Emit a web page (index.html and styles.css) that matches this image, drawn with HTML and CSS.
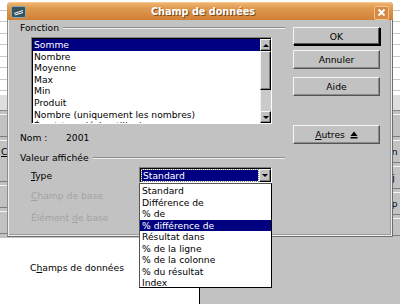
FILE: index.html
```html
<!DOCTYPE html>
<html lang="fr">

<head>
    <meta charset="UTF-8">
    <title>Champ de données</title>
    <link rel="stylesheet" href="styles.css">
</head>

<body>

    <div class="parent">
        <div class="sheet">
            <div class="strip left-strip"></div>
            <div class="strip right-strip"></div>
        </div>

        <div class="middle">
            <div class="side left-side">
                <div class="band"></div>
                <div class="pbox"></div>
                <div class="pbox tall"><u>C</u></div>
                <div class="pbox"></div>
                <div class="pbox"></div>
            </div>
            <div class="side right-side">
                <div class="band"></div>
                <div class="pbox">C</div>
                <div class="pbox">nn</div>
                <div class="pbox">Aj</div>
                <div class="pbox">pp</div>
                <div class="pbox short">ti</div>
            </div>
        </div>

        <div class="bottom">
            <div class="fields-pane">C<u>h</u>amps de données</div>
            <div class="grey-pane"></div>
        </div>
    </div>

    <div class="dialog">
        <div class="titlebar">
            <svg class="app-icon" width="15" height="12" viewBox="0 0 15 12">
                <rect x="0.5" y="0.5" width="14" height="11" rx="1.5" fill="#35525f" stroke="#8fa6b0" />
                <path d="M3 7.5 L12 4.5 M4 9 L12 6.5" stroke="#fff" stroke-width="1" />
            </svg>
            <span class="title">Champ de données</span>
            <span class="close">
                <svg width="9" height="9" viewBox="0 0 9 9">
                    <path d="M1.5 1.5 L7.5 7.5 M7.5 1.5 L1.5 7.5" stroke="#fff" stroke-width="2" />
                </svg>
            </span>
        </div>

        <div class="dialog-body">
            <div class="main-col">
                <div class="group-head"><span>Fonction</span><i class="rule"></i></div>

                <div class="listbox sunken">
                    <ul class="items">
                        <li class="selected">Somme</li>
                        <li>Nombre</li>
                        <li>Moyenne</li>
                        <li>Max</li>
                        <li>Min</li>
                        <li>Produit</li>
                        <li>Nombre (uniquement les nombres)</li>
                        <li>Écart-type (échantillon)</li>
                    </ul>
                    <div class="scrollbar">
                        <div class="sb-btn raised"><i class="tri up"></i></div>
                        <div class="sb-thumb raised"></div>
                        <div class="sb-track"></div>
                        <div class="sb-btn raised"><i class="tri down"></i></div>
                    </div>
                </div>

                <div class="name-row">
                    <span class="name-label">Nom :</span>
                    <span>2001</span>
                </div>

                <div class="group-head second"><span>Valeur affichée</span><i class="rule"></i></div>

                <div class="field-row type-row">
                    <span class="field-label"><u>T</u>ype</span>
                    <div class="combo sunken">
                        <div class="combo-value"><span>Standard</span></div>
                        <div class="combo-btn raised"><i class="tri down"></i></div>

                        <ul class="popup">
                            <li>Standard</li>
                            <li>Différence de</li>
                            <li>% de</li>
                            <li class="selected">% différence de</li>
                            <li>Résultat dans</li>
                            <li>% de la ligne</li>
                            <li>% de la colonne</li>
                            <li>% du résultat</li>
                            <li>Index</li>
                        </ul>
                    </div>
                </div>

                <div class="field-row disabled first-off"><span class="field-label"><u>C</u>hamp de base</span></div>
                <div class="field-row disabled second-off"><span class="field-label">Élément <u>d</u>e base</span></div>
            </div>

            <div class="button-col">
                <button class="btn default">OK</button>
                <button class="btn cancel">Annuler</button>
                <button class="btn help">Aide</button>
                <button class="btn more"><span><u>A</u>utres</span>
                    <svg width="8" height="8" viewBox="0 0 8 8">
                        <path d="M4 0.5 L7.5 5 L0.5 5 Z" fill="#000" />
                        <rect x="0.5" y="6" width="7" height="1.5" fill="#000" />
                    </svg>
                </button>
            </div>
        </div>
    </div>

</body>

</html>
```

FILE: styles.css
```css
body {
    margin: 0;
    width: 400px;
    height: 304px;
    overflow: hidden;
    position: relative;
    font-family: "DejaVu Sans", sans-serif;
    font-size: 9.2px;
    color: #000;
    background-color: #c2c2c2;
}

ul {
    list-style: none;
    margin: 0;
    padding: 0;
}

/* window behind the dialog */

.parent {
    width: 400px;
    height: 304px;
}

.sheet {
    height: 95px;
    display: flex;
    justify-content: space-between;
    background-color: #fff;
}

.strip {
    width: 15px;
    height: 95px;
    background-image: repeating-linear-gradient(to bottom, #fff 0, #fff 10px, #c8c8c8 10px, #c8c8c8 11px, #fff 11px, #fff 11.5px);
}

.left-strip {
    width: 8px;
}

.middle {
    height: 143px;
    display: flex;
    justify-content: space-between;
}

.side {
    width: 8px;
    display: flex;
    flex-direction: column;
    gap: 3px;
    overflow: hidden;
}

.right-side {
    width: 15px;
}

.band {
    height: 15px;
    background-color: #dedede;
    border-bottom: 1px solid #8a8a8a;
}

.pbox {
    height: 21px;
    line-height: 21px;
    padding-left: 1px;
    background-color: #c2c2c2;
    border-top: 1px solid #f4f4f4;
    border-bottom: 1px solid #7c7c7c;
    white-space: nowrap;
}

.pbox.tall {
    height: 40px;
}

.pbox.short {
    height: 16px;
    line-height: 16px;
}

.bottom {
    height: 66px;
    display: flex;
}

.fields-pane {
    width: 169px;
    padding: 24px 0 0 30px;
    background-color: #fff;
    border-right: 1px solid #000;
}

.grey-pane {
    flex: 1;
}

/* dialog window */

.dialog {
    position: absolute;
    left: 7px;
    top: 2px;
    width: 384px;
    height: 234px;
    background-color: #c2c2c2;
    border-left: 1px solid #8c8c8c;
    border-right: 1px solid #6e6e6e;
    border-bottom: 1px solid #6e6e6e;
    border-radius: 4px 4px 0 0;
    box-shadow: inset 1px 0 #eeeeee, inset -1px -1px #eeeeee, inset -2px -2px #9a9a9a;
}

.titlebar {
    height: 18px;
    margin-left: -1px;
    margin-right: -1px;
    display: flex;
    align-items: center;
    padding: 0 4px 0 4px;
    border-radius: 4px 4px 0 0;
    background: linear-gradient(to bottom, #eeb36e 0, #e09a50 30%, #cf8036 100%);
    border-top: 1px solid #f6c890;
    box-sizing: border-box;
}

.app-icon {
    display: block;
    margin-top: 1px;
}

.title {
    flex: 1;
    text-align: center;
    padding-left: 6px;
    font-weight: bold;
    font-size: 9.7px;
    color: #fff;
    text-shadow: 1px 1px 0 #7a4a18;
}

.close {
    width: 13px;
    height: 12px;
    margin-top: 2px;
    display: flex;
    align-items: center;
    justify-content: center;
    border: 1px solid #f2c490;
    border-radius: 2px;
    background-color: #d38a44;
}

.dialog-body {
    display: flex;
    height: 216px;
}

.main-col {
    width: 265px;
    padding-left: 12px;
}

.group-head {
    display: flex;
    align-items: center;
    gap: 4px;
    height: 12px;
    line-height: 12px;
    margin-top: 2px;
}

.group-head.second {
    margin-top: 8px;
}

.rule {
    flex: 1;
    height: 0;
    border-top: 1px solid #8c8c8c;
    border-bottom: 1px solid #f0f0f0;
}

.sunken {
    border: 1px solid;
    border-color: #808080 #fff #fff #808080;
    box-shadow: inset 1px 1px #000;
}

.raised {
    box-sizing: border-box;
    border: 1px solid;
    border-color: #f4f4f4 #000 #000 #f4f4f4;
    box-shadow: inset -1px -1px #808080;
    background-color: #c2c2c2;
}

.listbox {
    margin: 3px 0 0 11px;
    display: flex;
    background-color: #fff;
    overflow: hidden;
    padding: 1px 0 0 1px;
    box-sizing: border-box;
    width: 241px;
    height: 87px;
}

.items {
    flex: 1;
    line-height: 11.6px;
    white-space: nowrap;
    overflow: hidden;
}

.items li {
    padding-left: 1px;
}

.selected {
    background-color: #000080;
    color: #fff;
}

.scrollbar {
    width: 11px;
    display: flex;
    flex-direction: column;
}

.sb-btn {
    height: 12px;
    display: flex;
    align-items: center;
    justify-content: center;
}

.sb-thumb {
    height: 39px;
}

.sb-track {
    flex: 1;
    background-color: #cacaca;
    border-left: 1px solid #f0f0f0;
}

.tri {
    width: 0;
    height: 0;
    border-left: 3px solid transparent;
    border-right: 3px solid transparent;
}

.tri.up {
    border-bottom: 3px solid #000;
}

.tri.down {
    border-top: 3px solid #000;
}

.name-row {
    display: flex;
    height: 12px;
    line-height: 12px;
    margin-top: 8px;
}

.name-label {
    width: 46px;
}

.field-row {
    display: flex;
    align-items: center;
    padding-left: 11px;
}

.type-row {
    margin-top: 3px;
    height: 16px;
}

.field-label {
    width: 108px;
    white-space: nowrap;
}

.disabled {
    color: #a2a2a2;
    height: 12px;
    line-height: 12px;
}

.first-off {
    margin-top: 7px;
}

.second-off {
    margin-top: 10px;
}

.combo {
    position: relative;
    width: 133px;
    height: 16px;
    box-sizing: border-box;
    display: flex;
    padding: 1px 0 0 1px;
    background-color: #fff;
}

.combo-value {
    flex: 1;
    padding: 1px;
}

.combo-value span {
    display: block;
    height: 11px;
    line-height: 11px;
    padding-left: 1px;
    background-color: #000080;
    color: #fff;
    outline: 1px dotted #7a7a7a;
}

.combo-btn {
    width: 12px;
    display: flex;
    align-items: center;
    justify-content: center;
}

.popup {
    position: absolute;
    left: -1px;
    top: 15px;
    width: 133px;
    height: 105px;
    box-sizing: border-box;
    padding-top: 1px;
    background-color: #fff;
    border: 1px solid #555;
    border-right-color: #000;
    border-bottom-color: #000;
    line-height: 11.5px;
    color: #000;
}

.popup li {
    padding-left: 2px;
}

.button-col {
    width: 87px;
    margin-left: 8px;
    display: flex;
    flex-direction: column;
    padding-top: 7px;
}

.btn {
    font-family: "DejaVu Sans", sans-serif;
    font-size: 9.2px;
    font-weight: normal;
    height: 19px;
    padding: 0;
    color: #000;
    background-color: #c2c2c2;
    border: 1px solid;
    border-color: #f4f4f4 #555 #555 #f4f4f4;
    box-shadow: inset -1px -1px #8a8a8a;
}

.btn.default {
    height: 18px;
    border-color: #f4f4f4 #000 #000 #f4f4f4;
    box-shadow: inset -1px -1px #555, 1px 1px #000;
}

.cancel {
    margin-top: 5px;
}

.help {
    margin-top: 8px;
}

.more {
    margin-top: 29px;
    display: flex;
    align-items: center;
    justify-content: center;
    gap: 5px;
}
```
